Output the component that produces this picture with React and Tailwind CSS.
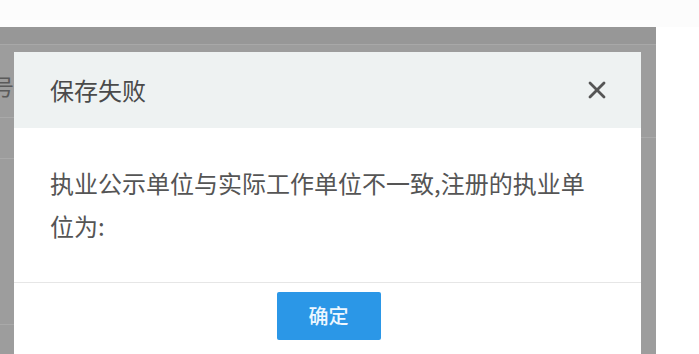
import { X } from 'lucide-react'

const font = { fontFamily: '"Noto Sans CJK SC", "Liberation Sans", sans-serif' }

function EdgeStrip({ width, children }) {
  return <div className={`${width} shrink-0 flex flex-col overflow-hidden`}>{children}</div>
}

export default function App() {
  return (
    <div className="w-[699px] h-[354px] overflow-hidden bg-white flex flex-col" style={font}>
      {/* page top */}
      <div className="h-[27px] shrink-0 bg-[#fcfcfc]" />

      <div className="flex flex-1 min-h-0">
        {/* dimmed page behind the dialog */}
        <div className="w-[656px] h-full bg-[#9d9d9d] flex flex-col">
          <div className="h-[18px] shrink-0 bg-[#979797] border-b border-[#a8a8a8]" />
          <div className="flex flex-1 min-h-0 pt-[7px]">
            <EdgeStrip width="w-[14px]">
              <div className="h-[66px] flex items-center justify-end border-b border-[#a9a9a9]">
                <span className="text-[22px] text-[#5a5a5a] leading-none whitespace-nowrap">号</span>
              </div>
              <div className="h-[41px] border-b border-[#a9a9a9]" />
              <div className="h-[166px] border-b border-[#a9a9a9]" />
            </EdgeStrip>

            {/* dialog */}
            <div className="w-[627px] h-[310px] shrink-0 bg-white flex flex-col">
              <div className="h-[76px] shrink-0 bg-[#eef2f2] flex items-center justify-between pl-[36px] pr-[30px]">
                <span className="text-[24px] text-[#4a4a4a]">保存失败</span>
                <X size={28} strokeWidth={2.4} className="text-[#555]" />
              </div>
              <div className="h-[155px] shrink-0 pl-[36px] pt-[33px] border-b border-[#e6e6e6]">
                <p className="w-[540px] text-[24px] leading-[43px] text-[#555]">
                  执业公示单位与实际工作单位不一致,注册的执业单位为:
                </p>
              </div>
              <div className="flex justify-center pt-[9px]">
                <button className="w-[104px] h-[48px] ml-[2px] rounded-[2px] bg-[#2b97e7] text-[#eef7ff] text-[20px] font-medium">
                  确定
                </button>
              </div>
            </div>

            <EdgeStrip width="w-[15px]">
              <div className="h-[86px] border-b border-[#a9a9a9]" />
            </EdgeStrip>
          </div>
        </div>
        <div className="flex-1 bg-white" />
      </div>
    </div>
  )
}
